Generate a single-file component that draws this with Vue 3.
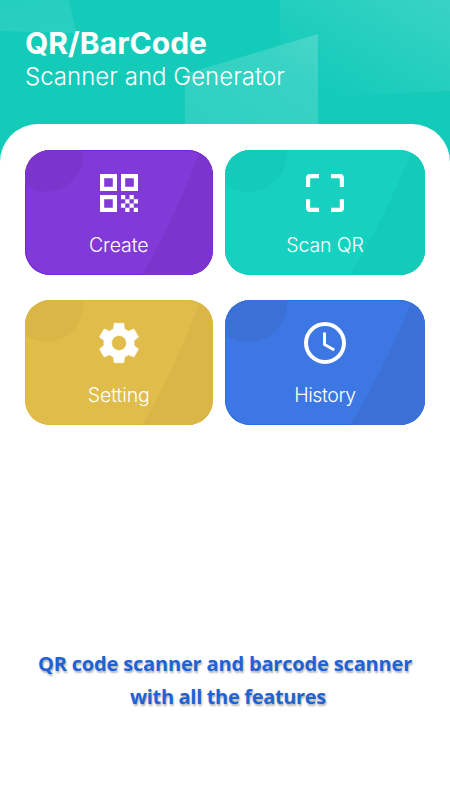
<script setup>
const cards = [
  { id: 'create', label: 'Create', color: '#8139d8', shade: '#7b35cc', edge: '#7425cf' },
  { id: 'scan', label: 'Scan QR', color: '#16d1c0', shade: '#14cbba', edge: '#13ccbb' },
  { id: 'setting', label: 'Setting', color: '#e0bc4b', shade: '#d9b646', edge: '#dfb93f' },
  { id: 'history', label: 'History', color: '#3d77e3', shade: '#3b71d7', edge: '#2a70e1' },
]
</script>

<template>
  <main class="screen">
    <header class="header">
      <svg class="header-art" viewBox="0 0 450 170">
        <defs>
          <linearGradient id="left-fade" x1="0" y1="0" x2="0.3" y2="1">
            <stop offset="0" stop-color="#fff" stop-opacity="0.07" />
            <stop offset="1" stop-color="#fff" stop-opacity="0.09" />
          </linearGradient>
          <linearGradient id="right-fade" gradientUnits="userSpaceOnUse" x1="400" y1="-20" x2="335" y2="95">
            <stop offset="0" stop-color="#fff" stop-opacity="0.15" />
            <stop offset="1" stop-color="#fff" stop-opacity="0" />
          </linearGradient>
          <linearGradient id="middle-fade" gradientUnits="userSpaceOnUse" x1="318" y1="35" x2="230" y2="160">
            <stop offset="0" stop-color="#fff" stop-opacity="0.18" />
            <stop offset="1" stop-color="#fff" stop-opacity="0.1" />
          </linearGradient>
        </defs>
        <path d="M0 0H69L76 33L0 31Z" fill="url(#left-fade)" />
        <path d="M280 0H450V91L280 98Z" fill="url(#right-fade)" />
        <path d="M185 74L318 34V170H185Z" fill="url(#middle-fade)" />
      </svg>
      <h1 class="title">QR/BarCode</h1>
      <p class="subtitle">Scanner and Generator</p>
    </header>

    <section class="panel">
      <div class="grid">
        <button
          v-for="card in cards"
          :key="card.id"
          class="card"
          :style="{ backgroundColor: card.color, boxShadow: `inset 0 0 0 1px ${card.edge}` }"
        >
          <svg class="card-art" viewBox="0 0 200 124" preserveAspectRatio="none">
            <ellipse cx="23" cy="5" rx="39" ry="36.5" :fill="card.shade" />
            <path d="M125 124Q160 68 187 0H200V124Z" :fill="card.shade" />
          </svg>

          <svg v-if="card.id === 'create'" class="icon" viewBox="0 0 44 44">
            <path
              fill="#fff"
              fill-rule="evenodd"
              d="M3 3H20V20H3ZM7.2 7.2V15.8H15.8V7.2ZM24 3H41V20H24ZM28.2 7.2V15.8H36.8V7.2ZM3 24H20V41H3ZM7.2 28.2V36.8H15.8V28.2Z"
            />
            <path
              fill="#fff"
              d="M24 24h4.25v4.25H24zM32.5 24h4.25v4.25H32.5zM28.25 28.25h4.25v4.25h-4.25zM36.75 28.25H41v4.25h-4.25zM24 32.5h4.25v4.25H24zM32.5 32.5h4.25v4.25H32.5zM28.25 36.75h4.25V41h-4.25zM36.75 36.75H41V41h-4.25z"
            />
          </svg>

          <svg v-else-if="card.id === 'scan'" class="icon" viewBox="0 0 44 44">
            <path
              fill="none"
              stroke="#fff"
              stroke-width="4.2"
              d="M5.1 16V7Q5.1 5.1 7 5.1H16M28 5.1H37Q38.9 5.1 38.9 7V16M38.9 28.3V37Q38.9 38.9 37 38.9H28M16 38.9H7Q5.1 38.9 5.1 37V28.3"
            />
          </svg>

          <svg v-else-if="card.id === 'setting'" class="icon" viewBox="0 0 44 44">
            <path
              fill="#fff"
              fill-rule="evenodd"
              d="M17.2 2.2H26.8L27.5 8Q29.6 8.8 31.3 10.2L36.9 8L41.5 16L37 19.5Q37.3 22 37 24.5L41.5 28L36.9 36L31.3 33.8Q29.6 35.2 27.5 36L26.8 41.8H17.2L16.5 36Q14.4 35.2 12.7 33.8L7.1 36L2.5 28L7 24.5Q6.7 22 7 19.5L2.5 16L7.1 8L12.7 10.2Q14.4 8.8 16.5 8ZM22 14.5A7.5 7.5 0 1 0 22 29.5A7.5 7.5 0 1 0 22 14.5Z"
              stroke="#fff"
              stroke-width="0.6"
              stroke-linejoin="round"
            />
          </svg>

          <svg v-else class="icon" viewBox="0 0 44 44">
            <circle cx="22" cy="22" r="19" fill="none" stroke="#fff" stroke-width="4" />
            <path d="M21.5 11.5V23.4L31.2 29" fill="none" stroke="#fff" stroke-width="2.9" />
          </svg>

          <span class="label" :class="card.id">{{ card.label }}</span>
        </button>
      </div>

      <p class="tagline">
        <span class="line-one">QR code scanner and barcode scanner</span><br>
        <span class="line-two">with all the features</span>
      </p>
    </section>
  </main>
</template>

<style>
body {
  margin: 0;
}
</style>

<style scoped>
.screen {
  display: flex;
  flex-direction: column;
  width: 450px;
  height: 800px;
  overflow: hidden;
  background: #14cbba;
  font-family: Inter, "Liberation Sans", sans-serif;
}

.header {
  position: relative;
  box-sizing: border-box;
  height: 124px;
  padding: 26px 25px 0;
  color: #fff;
}

.header-art {
  position: absolute;
  top: 0;
  left: 0;
  width: 450px;
  height: 170px;
}

.title,
.subtitle {
  position: relative;
  margin: 0;
  white-space: nowrap;
}

.title {
  font-size: 30px;
  line-height: 34px;
  font-weight: 700;
  letter-spacing: 0.05px;
}

.subtitle {
  font-size: 24px;
  line-height: 33px;
  font-weight: 350;
  letter-spacing: 0.02px;
}

.panel {
  position: relative;
  flex: 1;
  display: flex;
  flex-direction: column;
  justify-content: space-between;
  box-sizing: border-box;
  padding: 25.5px 25px 87px;
  border-radius: 38px 38px 0 0;
  background: #fff;
}

.grid {
  display: grid;
  grid-template-columns: 187.5px 200px;
  grid-auto-rows: 125px;
  gap: 25px 12.5px;
}

.card {
  position: relative;
  display: flex;
  flex-direction: column;
  align-items: center;
  gap: 17px;
  padding: 21.5px 0 0;
  border: none;
  border-radius: 25px;
  overflow: hidden;
  color: #fff;
  font-family: inherit;
  cursor: pointer;
}

.card-art {
  position: absolute;
  inset: 0;
  width: 100%;
  height: 100%;
}

.icon {
  position: relative;
  width: 44px;
  height: 44px;
}

.label {
  position: relative;
  font-size: 19.5px;
  line-height: 26px;
  font-weight: 350;
  letter-spacing: -0.1px;
  white-space: nowrap;
}

.label.history {
  letter-spacing: -0.4px;
}

.tagline {
  margin: 0;
  text-align: center;
  color: #1e63d6;
  font-family: "Open Sans", "Noto Sans", sans-serif;
  font-size: 20px;
  line-height: 33px;
  font-weight: 700;
  white-space: nowrap;
  text-shadow: 1px 2px 2px rgba(0, 0, 0, 0.3);
}

.line-one {
  letter-spacing: -0.17px;
}

.line-two {
  padding-left: 6px;
  letter-spacing: -0.33px;
}
</style>
